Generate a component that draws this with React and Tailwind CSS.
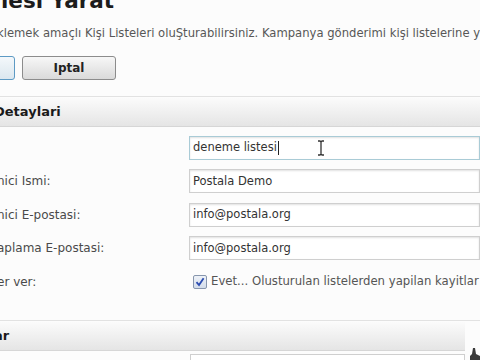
import React from 'react';

const font = { fontFamily: '"DejaVu Sans", Verdana, sans-serif' };

const IBeam = () => (
  <svg width="8" height="16" viewBox="0 0 8 16" className="ml-[38px]">
    <path d="M1 1 H3 L4 2 L5 1 H7 M4 2 V14 M1 15 H3 L4 14 L5 15 H7" fill="none" stroke="#333" strokeWidth="1.3" />
  </svg>
);

const Field = ({ label, value, focused, caret }) => (
  <div className="flex items-center h-[33.5px]">
    <div className="w-[192px] shrink-0 text-[12px] text-[#4a4a4a]">{label}</div>
    <div
      className={`flex-1 h-[24px] flex items-center pl-[3px] bg-white text-[11.5px] text-[#333] border shadow-[inset_0_1px_2px_rgba(0,0,0,0.12)] ${
        focused ? 'border-[#a9cbd6]' : 'border-[#cfcfcf]'
      }`}
    >
      {value}
      {caret && <span className="inline-block w-[1px] h-[14px] bg-[#222] ml-[1px]" />}
      {caret && <IBeam />}
    </div>
  </div>
);

const SectionHeader = ({ title, short }) => (
  <div className="border-t border-[#e2e2e2] pt-[1px]">
    <div
      className={`h-[29px] flex items-center bg-gradient-to-b from-[#fbfbfb] to-[#e5e5e5] border-b border-[#d6d6d6] ${
        short ? 'mr-[15px]' : ''
      }`}
    >
      <span className="text-[13px] font-bold text-[#1a1a1a] ml-[-3px]">{title}</span>
    </div>
  </div>
);

export default function App() {
  return (
    <div className="w-[480px] h-[360px] overflow-hidden bg-[#fcfcfc] relative" style={font}>
      <div className="ml-[-3px]">
        <h1 className="mt-[-11px] h-[24px] text-[21.5px] font-bold text-[#1c1c1c] leading-[24px] whitespace-nowrap ml-[4px]">
          lesi Yarat
        </h1>
        <p className="mt-[11px] h-[20px] flex items-center text-[11.6px] text-[#575757] whitespace-nowrap">
          klemek amaçlı Kişi Listeleri oluŞturabilirsiniz. Kampanya gönderimi kişi listelerine yapıl
        </p>
        <div className="flex items-center gap-[7px] mt-[12px] ml-[-42px]">
          <button className="w-[60px] h-[24px] rounded-[3px] border border-[#5d9ac4] bg-gradient-to-b from-[#f4f8fb] to-[#dbe7ef]" />
          <button className="w-[94px] h-[24px] rounded-[3px] border border-[#8c8c8c] bg-gradient-to-b from-[#f7f7f7] to-[#dadada] text-[12px] font-semibold text-[#222]">
            Iptal
          </button>
        </div>
        <div className="mt-[16px]">
          <SectionHeader title="Detaylari" />
        </div>
        <div className="pt-[4px]">
          <Field label="" value="deneme listesi" focused caret />
          <Field label="nici Ismi:" value="Postala Demo" />
          <Field label="nici E-postasi:" value="info@postala.org" />
          <Field label="aplama E-postasi:" value="info@postala.org" />
          <div className="flex items-center h-[33px]">
            <div className="w-[196px] shrink-0 text-[12px] text-[#4a4a4a]">er ver:</div>
            <span className="w-[14px] h-[14px] border border-[#8796ad] rounded-[2px] bg-gradient-to-b from-[#eef2f8] to-[#d3dcea] flex items-center justify-center">
              <svg width="10" height="10" viewBox="0 0 10 10">
                <path d="M1.5 5.2 L4 8 L8.6 1.2" fill="none" stroke="#2a4bb0" strokeWidth="1.8" />
              </svg>
            </span>
            <span className="ml-[4px] text-[11.7px] text-[#555] whitespace-nowrap">
              Evet... Olusturulan listelerden yapilan kayitlar
            </span>
          </div>
        </div>
        <div className="mt-[22px]">
          <SectionHeader title="ar" short />
        </div>
        <div className="ml-[193px] mt-[3px] h-[20px] border border-[#cfcfcf] bg-white mr-[15px]" />
      </div>
      <svg className="absolute right-0 bottom-0" width="12" height="14" viewBox="0 0 12 14">
        <path d="M5 2 L7 2 L8 8 L12 10 L12 14 L2 14 L2 10 L4 8 Z" fill="#3a3a3a" />
      </svg>
    </div>
  );
}
